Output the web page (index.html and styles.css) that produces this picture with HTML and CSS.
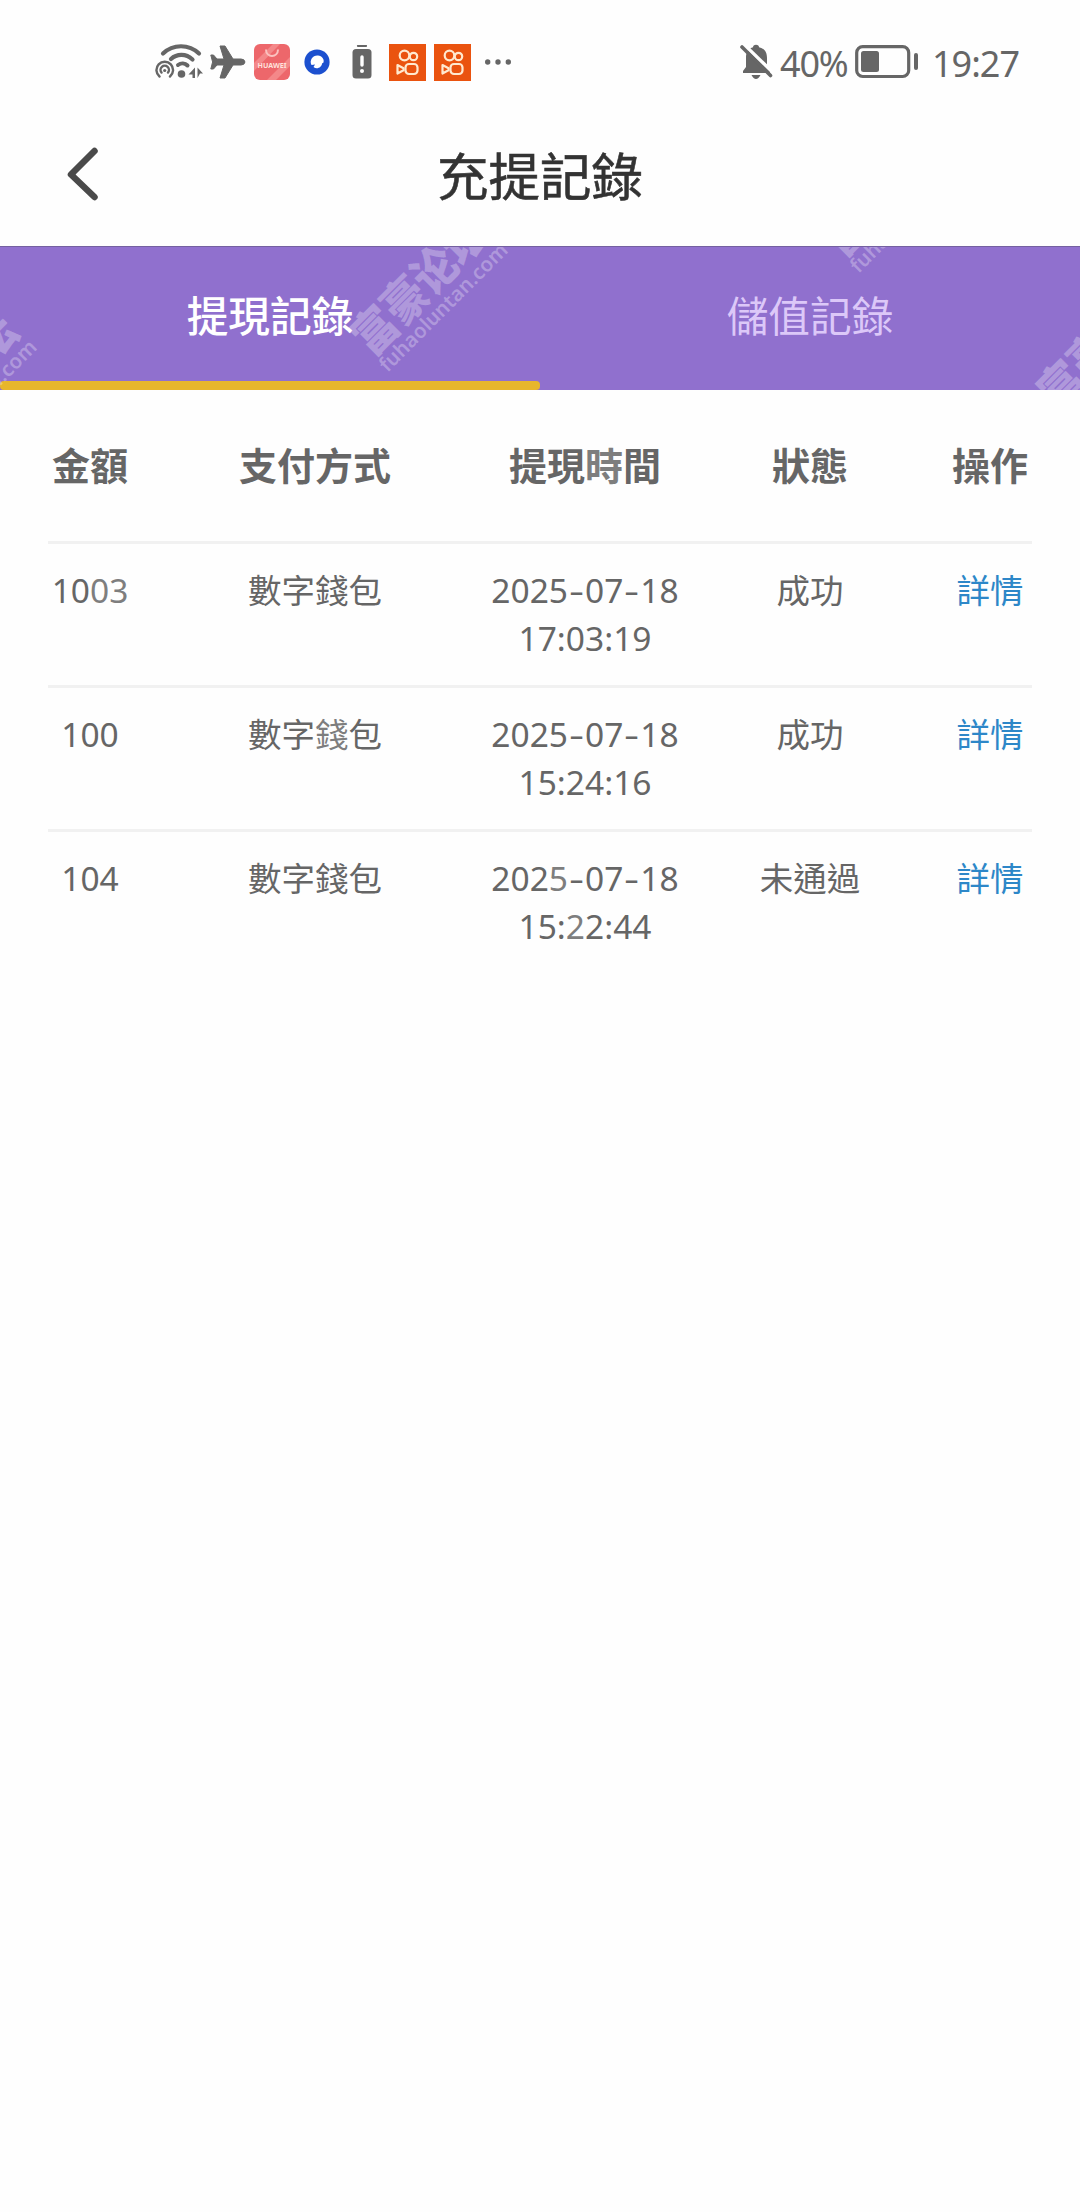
FILE: index.html
```html
<!DOCTYPE html>
<html lang="zh-Hant">
<head>
<meta charset="utf-8">
<title>充提記錄</title>
<link rel="stylesheet" href="styles.css">
</head>
<body>
<header class="status">
  <div class="status-icons">
    <svg class="i-wifi" width="48" height="36" viewBox="0 0 48 36" fill="none" stroke="#666" stroke-linecap="round">
      <path d="M8 9.500C18-.2 34-.2 44 9.500" stroke-width="4.200"/>
      <path d="M16 15C22 9.500 31 9.500 37.500 15.500" stroke-width="4.200"/>
      <path d="M23 21C26 18.800 30 19 32.500 21.500" stroke-width="4"/>
      <circle cx="26.500" cy="30" r="3.800" fill="#666" stroke="none"/>
      <path d="M4.500 32.500A8.300 8.300 0 1 1 15 32.500M6.500 28.500A4.200 4.200 0 1 1 13 28.500" stroke-width="2.400"/>
      <circle cx="9.700" cy="26.500" r="1.600" fill="#666" stroke="none"/>
      <path d="M40 23.500V34H37.500V30.500H33.500ZM42.500 34V23.500L48 29.500H45Z" fill="#666" stroke="none"/>
    </svg>
    <svg class="i-plane" width="36" height="36" viewBox="0 0 36 36" fill="#666">
      <path d="M35 18Q34.500 21 31 21H23L15 34H10L14 21H7L3.500 25H.8L2.600 18L.8 11H3.500L7 15H14L10 2H15L23 15H31Q34.500 15 35 18Z" stroke="#666" stroke-linejoin="round"/>
    </svg>
    <svg class="i-store" width="36" height="36" viewBox="0 0 36 36">
      <rect width="36" height="36" rx="6" fill="#ed676b"/>
      <path d="M0 19L19 0H26L0 27ZM13 36L36 13V22L22 36Z" fill="#f79a9a" opacity=".65"/>
      <path d="M12 5.500C12 14 24 14 24 5.500" fill="none" stroke="#fbc2bf" stroke-width="2"/>
      <text x="18" y="24" text-anchor="middle" class="store-name" textLength="29" lengthAdjust="spacingAndGlyphs">HUAWEI</text>
    </svg>
    <svg class="i-browser" width="26" height="26" viewBox="0 0 26 26">
      <circle cx="13" cy="13" r="12.600" fill="#1c50cf"/>
      <path d="M14 6.500C18 7 20.500 10 19.500 13.500L18 14.500C18 18 13 21 9.500 18L11 15.500L7.500 16C5 11 9 6 14 6.500Z" fill="#fff"/>
    </svg>
    <svg class="i-alert" width="20" height="34" viewBox="0 0 20 34">
      <path d="M6 1H14" stroke="#666" stroke-width="2.200" stroke-linecap="round"/>
      <rect x=".5" y="4" width="19" height="29.500" rx="3.500" fill="#666"/>
      <path d="M10 12V20" stroke="#fff" stroke-width="3.400" stroke-linecap="round"/>
      <circle cx="10" cy="26" r="2" fill="#fff"/>
    </svg>
    <svg class="i-cam" width="37" height="37" viewBox="0 0 37 37">
      <rect width="37" height="37" fill="#ea530f"/>
      <g fill="none" stroke="#ffe9cf" stroke-width="2.200" stroke-linejoin="round"><circle cx="15.500" cy="11.500" r="4.800"/><circle cx="24.500" cy="12.500" r="3.700"/><rect x="16.500" y="20" width="12" height="10" rx="3.500"/><path d="M8.500 21L14.500 24.300V26.300L8.500 29.500Z"/></g>
    </svg>
    <svg class="i-cam" width="37" height="37" viewBox="0 0 37 37">
      <rect width="37" height="37" fill="#ea530f"/>
      <g fill="none" stroke="#ffe9cf" stroke-width="2.200" stroke-linejoin="round"><circle cx="15.500" cy="11.500" r="4.800"/><circle cx="24.500" cy="12.500" r="3.700"/><rect x="16.500" y="20" width="12" height="10" rx="3.500"/><path d="M8.500 21L14.500 24.300V26.300L8.500 29.500Z"/></g>
    </svg>
    <svg class="i-more" width="26" height="6" viewBox="0 0 26 6" fill="#666"><circle cx="2.700" cy="3" r="2.700"/><circle cx="13" cy="3" r="2.700"/><circle cx="23.300" cy="3" r="2.700"/></svg>
  </div>
  <div class="status-info">
    <svg class="i-bell" width="33" height="36" viewBox="0 0 33 36">
      <path d="M16 .8C18 .8 19 2 19 3.300C25 4.500 27 9 27 14V21L30 27V29H3V27L6 23V13C6 8 9 4.500 13 3.300C13 2 14 .8 16 .8ZM11.500 31H20.500Q18.500 35 16 35Q13.500 35 11.500 31Z" fill="#666"/>
      <path d="M4 .5L34 29.500" stroke="#fff" stroke-width="3.500"/>
      <path d="M2 3L30.500 31.500" stroke="#666" stroke-width="3.600" stroke-linecap="round"/>
    </svg>
    <span class="percent">40%</span>
    <svg class="i-battery" width="64" height="34" viewBox="0 0 64 34">
      <rect x="1.700" y="1.700" width="52" height="29.800" rx="6" fill="none" stroke="#666" stroke-width="3.200"/>
      <rect x="6" y="6" width="18" height="21" rx="2.500" fill="#666"/>
      <rect x="59" y="8" width="4" height="17" rx="2" fill="#666"/>
    </svg>
    <span class="clock">19:27</span>
  </div>
</header>

<nav class="titlebar">
  <svg class="back" width="34" height="56" viewBox="0 0 34 56" fill="none" stroke="#4a4a4a" stroke-width="6.500" stroke-linecap="round" stroke-linejoin="round"><path d="M28.500 5L5 28.500L28.500 51"/></svg>
  <h1>充提記錄</h1>
</nav>

<div class="tabs">
  <div class="tab active">提現記錄</div>
  <div class="tab">儲值記錄</div>
  <div class="mark m1"><b>富豪论坛</b><span>fuhaoluntan.com</span></div>
  <div class="mark m2"><b>富豪论坛</b><span>fuhaoluntan.com</span></div>
  <div class="mark m3"><b>富豪论坛</b><span>fuhaoluntan.com</span></div>
  <div class="mark m4"><b>富豪论坛</b><span>fuhaoluntan.com</span></div>
</div>

<main>
  <div class="row head"><span>金額</span><span>支付方式</span><span>提現<i>時</i>間</span><span>狀態</span><span>操作</span></div>
  <div class="row"><span>10<i>03</i></span><span>數字錢包</span><span>2025<u>-</u>07<u>-</u>18<br>17:03:19</span><span>成功</span><a>詳情</a></div>
  <div class="row"><span>100</span><span>數字<i>錢</i>包</span><span>2025<u>-</u>07<u>-</u>18<br>15:24:16</span><span>成功</span><a>詳情</a></div>
  <div class="row last"><span>104</span><span>數字錢包</span><span>202<i>5</i><u>-</u>07<u>-</u>18<br>15:<i>2</i>2:44</span><span>未通過</span><a>詳情</a></div>
</main>
</body>
</html>
```
FILE: styles.css
```css
* { box-sizing: border-box; }
body {
  margin: 0;
  min-height: 2212px;
  background: #fefefe;
  color: #666;
  font-family: "Noto Sans", "Noto Sans CJK TC", sans-serif;
  overflow-x: hidden;
}
svg { display: block; flex: none; }

.status {
  height: 102px;
  padding: 22px 60px 0 155px;
  display: flex;
  justify-content: space-between;
  align-items: center;
}
.status-icons, .status-info { display: flex; align-items: center; }
.i-plane { margin-left: 7px; }
.i-store { margin-left: 8px; }
.i-browser { margin-left: 14px; }
.i-alert { margin-left: 22px; }
.i-cam { margin-left: 17px; }
.i-cam + .i-cam { margin-left: 8px; }
.i-more { margin-left: 14px; }
.store-name { font: 700 7.500px "Noto Sans", sans-serif; fill: #ffe1dc; }
.percent, .clock {
  font-size: 36px;
  line-height: 44px;
  white-space: nowrap;
  padding-top: 4px;
}
.percent { width: 67px; margin-left: 7px; letter-spacing: -1.200px; }
.i-battery { margin-left: 8px; }
.clock { width: 88px; margin-left: 13px; letter-spacing: -1px; }

.titlebar {
  height: 144px;
  display: grid;
  grid-template-columns: 120px 1fr 120px;
  align-items: center;
}
.back { margin-left: 66px; }
h1 {
  margin: 0;
  padding-bottom: 1px;
  text-align: center;
  color: #333;
  font-size: 51.500px;
  font-weight: 400;
  line-height: 71px;
  font-family: "Noto Sans CJK TC", sans-serif;
  -webkit-text-stroke: .6px #333;
}

.tabs {
  position: relative;
  height: 144px;
  display: grid;
  grid-template-columns: 1fr 1fr;
  overflow: hidden;
  background: #9070ce;
  border-top: 1px solid #7460a0;
}
.tab {
  display: flex;
  justify-content: center;
  padding-top: 38px;
  font: 400 41.700px/58px "Noto Sans CJK TC", sans-serif;
  color: #dcc8f8;
}
.tab.active {
  color: #fff;
  font-weight: 500;
}
.tab.active::after {
  content: "";
  position: absolute;
  left: 0;
  bottom: 0;
  width: 540px;
  height: 9px;
  border-radius: 4px;
  background: #e7b62c;
}
.mark {
  position: absolute;
  width: 172px;
  height: 70px;
  transform: translate(-50%, -50%) rotate(-45deg);
  color: rgba(255, 255, 255, .28);
  white-space: nowrap;
}
.mark b, .mark span { display: block; }
.mark b {
  font: 900 42.500px/46px "Noto Sans CJK SC", sans-serif;
  transform: scaleY(1.120);
}
.mark span { font: 600 20.500px/23px "Noto Sans", sans-serif; }
.m1 { left: 427px; top: 44px; }
.m2 { left: 898px; top: -55px; }
.m3 { left: 1114px; top: 99px; }
.m4 { left: -44px; top: 141px; }

.row {
  height: 144px;
  display: grid;
  grid-template-columns: 180px 270px 270px 180px 180px;
  text-align: center;
  padding-top: 22px;
  font-size: 33.500px;
  line-height: 48px;
  background: linear-gradient(#f1f1f1, #f1f1f1) center bottom / 984px 3px no-repeat;
}
.row.head {
  height: 154px;
  padding-top: 50px;
  font: 700 38px/48px "Noto Sans CJK TC", sans-serif;
}
.row.last { background: none; }
.row a { color: #2d87c8; }
.row i { font-style: normal; color: #7e7e7e; }
.row u {
  display: inline-block;
  width: 17px;
  text-decoration: none;
  transform: scaleX(1.400);
}
```
